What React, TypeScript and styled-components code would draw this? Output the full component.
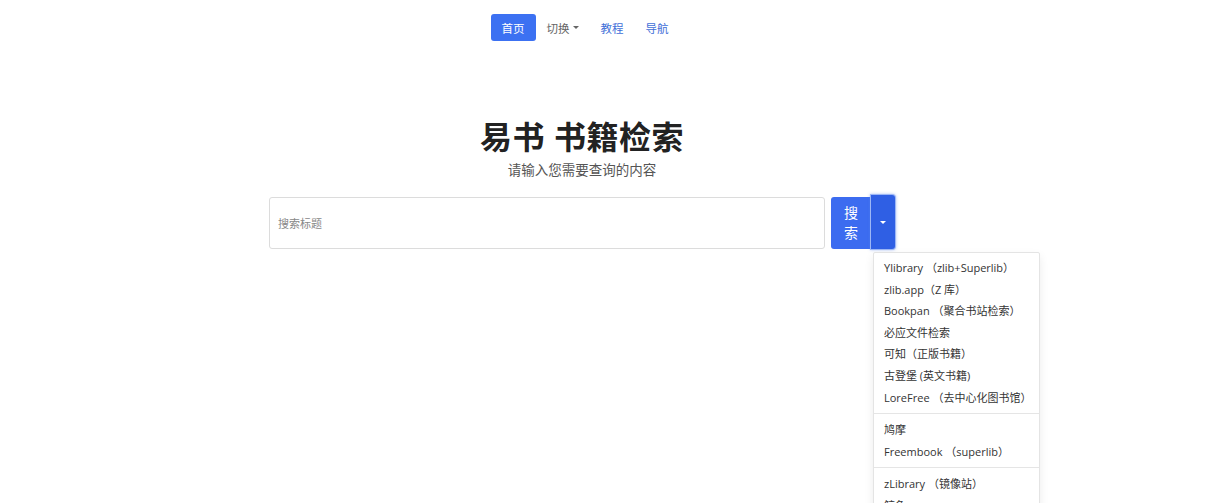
import React from "react";
import styled, { createGlobalStyle } from "styled-components";

const Global = createGlobalStyle`
  html { overflow: hidden; height: 100%; }
  html, body { margin: 0; padding: 0; background: #fff; }
  body { min-height: 100%; font-family: "Open Sans", "Noto Sans CJK SC", sans-serif; color: #333; }
  #root { min-height: 503px; }
  * { box-sizing: border-box; }
`;

const Page = styled.div`
  width: 1164px;
  min-height: 503px;
  display: flex;
  flex-direction: column;
  align-items: center;
`;

const Nav = styled.nav`
  display: flex;
  margin: 14px 0 0 6px;
  height: 27px;
`;

const NavItem = styled.a<{ $active?: boolean; $muted?: boolean }>`
  display: flex;
  align-items: center;
  gap: 3px;
  padding: 0 11px;
  font-size: 11.5px;
  border-radius: 3px;
  text-decoration: none;
  cursor: pointer;
  background: ${(p) => (p.$active ? "#3c71f2" : "transparent")};
  color: ${(p) => (p.$active ? "#fff" : p.$muted ? "#666" : "#3f6fd8")};
`;

const Caret = styled.span`
  display: inline-block;
  width: 0;
  height: 0;
  border-left: 3px solid transparent;
  border-right: 3px solid transparent;
  border-top: 3px solid currentColor;
`;

const Title = styled.h1`
  margin: 76px 0 0;
  font-size: 32px;
  line-height: 40px;
  font-weight: 700;
  color: #222;
  letter-spacing: 0.5px;
`;

const Subtitle = styled.p`
  margin: 3px 0 0;
  font-size: 13.5px;
  line-height: 20px;
  color: #555;
`;

const SearchRow = styled.div`
  position: relative;
  margin-top: 17px;
  display: flex;
  width: 626px;
  height: 52px;
`;

const Input = styled.input`
  flex: 0 0 556px;
  height: 52px;
  border: 1px solid #dcdcdc;
  border-radius: 3px;
  padding: 0 8px;
  font-size: 11px;
  font-family: inherit;
  color: #333;
  outline: none;
  &::placeholder { color: #888; }
`;

const SearchButton = styled.button`
  margin-left: 6px;
  width: 40px;
  height: 52px;
  border: none;
  border-radius: 3px 0 0 3px;
  background: #3c6cf0;
  color: #fff;
  font-size: 14px;
  line-height: 20px;
  font-family: inherit;
  padding: 0 12px;
  word-break: break-all;
`;

const ToggleButton = styled.button`
  width: 24px;
  height: 54px;
  margin-top: -2px;
  border: none;
  border-radius: 0 3px 3px 0;
  background: #2f5fe4;
  color: #fff;
  display: flex;
  align-items: center;
  justify-content: center;
  box-shadow: 0 0 0 1px #9db7f5, 0 0 3px 1px rgba(90, 130, 240, 0.5);
  padding: 0;
`;

const Menu = styled.ul`
  position: absolute;
  left: 604px;
  top: 55px;
  width: 167px;
  margin: 0;
  padding: 4px 0;
  list-style: none;
  background: #fff;
  border: 1px solid #e4e4e4;
  border-radius: 2px;
  box-shadow: 0 4px 10px rgba(0, 0, 0, 0.08);
  z-index: 10;
`;

const MenuItem = styled.li`
  padding: 0 10px;
  font-size: 11px;
  line-height: 21.6px;
  color: #333;
  white-space: nowrap;
`;

const Divider = styled.li`
  height: 1px;
  margin: 5px 0;
  background: #e5e5e5;
`;

const groups = [
  [
    "Ylibrary （zlib+Superlib）",
    "zlib.app（Z 库）",
    "Bookpan （聚合书站检索）",
    "必应文件检索",
    "可知（正版书籍）",
    "古登堡 (英文书籍)",
    "LoreFree （去中心化图书馆）",
  ],
  ["鸠摩", "Freembook （superlib）"],
  ["zLibrary （镜像站）", "鲸鱼"],
];

export default function App() {
  return (
    <>
      <Global />
      <Page>
        <Nav>
          <NavItem $active>首页</NavItem>
          <NavItem $muted>
            切换 <Caret />
          </NavItem>
          <NavItem>教程</NavItem>
          <NavItem>导航</NavItem>
        </Nav>
        <Title>易书 书籍检索</Title>
        <Subtitle>请输入您需要查询的内容</Subtitle>
        <SearchRow>
          <Input placeholder="搜索标题" />
          <SearchButton>搜索</SearchButton>
          <ToggleButton>
            <Caret />
          </ToggleButton>
          <Menu>
            {groups.map((g, gi) => (
              <React.Fragment key={gi}>
                {gi > 0 && <Divider />}
                {g.map((t) => (
                  <MenuItem key={t}>{t}</MenuItem>
                ))}
              </React.Fragment>
            ))}
          </Menu>
        </SearchRow>
      </Page>
    </>
  );
}
